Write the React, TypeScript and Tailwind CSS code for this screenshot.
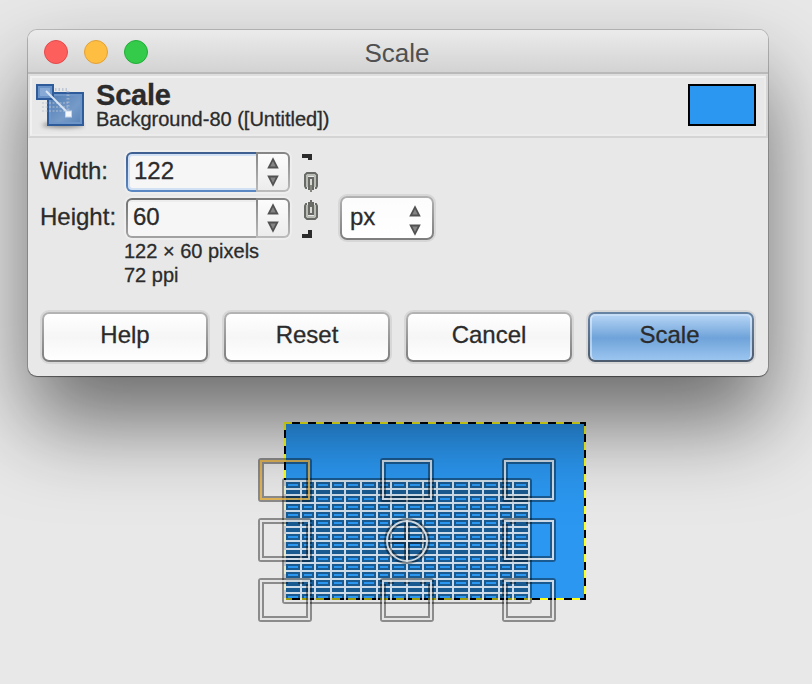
import React from "react";

const COLS = [284, 300, 314, 330, 344, 360, 376, 390, 406, 422, 436, 452, 468, 482, 498, 512, 528];
const ROWS = [480, 488, 494, 502, 510, 518, 526, 532, 540, 548, 554, 562, 570, 578, 586, 592, 600];

const gridPath =
  COLS.map((x) => `M${x + 1} 481V601`).join("") + ROWS.map((y) => `M285 ${y + 1}H529`).join("");

/* A light stroke inside a wider translucent dark one */
function Outlined({ d, light = "#fff" }: { d: string; light?: string }) {
  return (
    <g fill="none">
      <path d={d} stroke="#000" strokeOpacity="0.4" strokeWidth="6" strokeLinejoin="round" />
      <path d={d} stroke={light} strokeOpacity="0.78" strokeWidth="2" />
    </g>
  );
}

function Handle({ cx, cy, light }: { cx: number; cy: number; light?: string }) {
  return <Outlined d={`M${cx - 24} ${cy - 19}h48v38h-48z`} light={light} />;
}

function CanvasImage() {
  return (
    <svg className="ml-[250px] mt-[39px] block" width="350" height="215" viewBox="250 415 350 215">
      <rect x="284" y="422" width="302" height="178" fill="#2b97f0" />
      <g strokeWidth="2" fill="none" shapeRendering="crispEdges">
        <path d="M284 423H586M284 599H586M285 422V600M585 422V600" stroke="#ffff1e" />
        <g stroke="#000" strokeDasharray="8 8">
          <path d="M292 423H586" />
          <path d="M292 599H586" />
          <path d="M285 430V600" />
          <path d="M585 422V600" strokeDashoffset="4" />
        </g>
      </g>
      <Outlined d={gridPath + "M285 481H529V601H285Z"} />
      <Handle cx={285} cy={480} light="#f8c04a" />
      <Handle cx={407} cy={480} />
      <Handle cx={529} cy={480} />
      <Handle cx={285} cy={540} />
      <Handle cx={529} cy={540} />
      <Handle cx={285} cy={600} />
      <Handle cx={407} cy={600} />
      <Handle cx={529} cy={600} />
      <Outlined d="M387 541a20 20 0 1 0 40 0a20 20 0 1 0 -40 0M387 541H427M407 521V561" />
    </svg>
  );
}

function ScaleIcon() {
  return (
    <svg width="52" height="52" viewBox="34 80 52 52" className="relative top-px block shrink-0">
      <defs>
        <linearGradient id="big" x1="0" y1="0" x2="1" y2="1">
          <stop offset="0" stopColor="#4c79b0" />
          <stop offset="0.6" stopColor="#769bc9" />
          <stop offset="1" stopColor="#5580b4" />
        </linearGradient>
        <filter id="soft" x="-20%" y="-100%" width="140%" height="300%">
          <feGaussianBlur stdDeviation="2" />
        </filter>
      </defs>
      <ellipse cx="63" cy="125" rx="21" ry="3" fill="#777" opacity="0.8" filter="url(#soft)" />
      <rect x="48" y="93" width="35" height="32" fill="url(#big)" stroke="#2e5c9a" strokeWidth="2" />
      <rect x="50" y="95" width="31" height="28" fill="none" stroke="#6d95c8" strokeWidth="2" />
      <rect x="37" y="85" width="16" height="14" fill="#6a94c9" stroke="#2e5c9a" strokeWidth="2" />
      <rect x="40" y="88" width="10" height="8" fill="#86a9d6" />
      <path d="M55 89.500H68M68 91V111" fill="none" stroke="#aebccf" strokeWidth="3" strokeDasharray="1.500 2" opacity="0.7" />
      <path d="M42 103H68M42 107H68M42 111H66" fill="none" stroke="#b9c4d3" strokeWidth="1.500" strokeDasharray="2 1.500" opacity="0.6" />
      <path d="M46 91L67 112" stroke="#d9e4f2" strokeWidth="2" />
      <rect x="65.500" y="111" width="6" height="6" fill="#f5f8fc" stroke="#c3d4e9" />
    </svg>
  );
}

function Arrow({ down = false }: { down?: boolean }) {
  return (
    <svg width="12" height="12" viewBox="0 0 12 12" className={down ? "block rotate-180" : "block"}>
      <path d="M6 2.200L10.300 10.500H1.700Z" fill="#858585" stroke="#525252" strokeWidth="1.800" />
    </svg>
  );
}

function ChainLink() {
  return (
    <svg width="18" height="84" viewBox="302 154 18 84" className="ml-3 mt-[2px] block">
      <path d="M302 154h10v6h-4v-2h-6zM308 230h4v8h-10v-4h6z" fill="#2b2b2b" />
      <g fill="none">
        <path d="M307 188h-1l-1-2V175l2-2h8l2 2v11l-1 2h-1" stroke="#666964" strokeWidth="2" />
        <path d="M307 187V176l1-1h6l1 1v11" stroke="#b9bbb5" strokeWidth="2" />
        <path d="M309 190V178h4v12" stroke="#666964" strokeWidth="2" />
        <path d="M311 179v6" stroke="#d8d8d5" strokeWidth="2" />
        <path d="M311 185v7" stroke="#85877f" strokeWidth="2" />
        <path d="M307 204h-1l-1 2v11l2 2h8l2-2V206l-1-2h-1" stroke="#666964" strokeWidth="2" />
        <path d="M307 205v11l1 1h6l1-1V205" stroke="#b9bbb5" strokeWidth="2" />
        <path d="M309 202v12h4V202" stroke="#666964" strokeWidth="2" />
        <path d="M311 207v6" stroke="#d8d8d5" strokeWidth="2" />
        <path d="M311 200v7" stroke="#4b4d48" strokeWidth="1.600" />
      </g>
    </svg>
  );
}

function SpinField({ value, focused = false }: { value: string; focused?: boolean }) {
  return (
    <div className="flex h-10 w-[164px] rounded-md shadow-[0_0_0_2px_rgba(255,255,255,0.25)]">
      <div className={`w-[130px] rounded-l-md py-[2px] pl-[2px] ${focused ? "bg-linear-to-b from-[#3f5f91] to-[#5b88c3]" : "bg-linear-to-b from-[#707070] to-[#a3a3a3]"}`}>
        <div className={`flex h-full items-center rounded-l bg-[#f6f6f6] ${focused ? "border-y-2 border-l-2 border-[#d3e1f5] pl-1" : "border-t-2 border-[#ededed] pl-[5px]"}`}>
          <span className={focused ? "relative -top-px" : "relative -top-[2px]"}>{value}</span>
        </div>
      </div>
      <div className="w-[34px] rounded-r-md bg-linear-to-b from-[#858585] to-[#bcbcbc] p-[2px]">
        <div className="flex h-full flex-col items-center justify-between rounded-r bg-linear-to-b from-[#fcfcfc] to-[#ececec] py-[3px]">
          <Arrow />
          <Arrow down />
        </div>
      </div>
    </div>
  );
}

function Button({ label, primary = false }: { label: string; primary?: boolean }) {
  return (
    <button className={`h-[50px] w-[166px] rounded-[7px] p-[2px] shadow-[0_0_0_2px_rgba(0,0,0,0.07)] ${primary ? "bg-linear-to-b from-[#6884a5] to-[#4d5b6d]" : "bg-linear-to-b from-[#b4b4b4] to-[#7d7d7d]"}`}>
      <span className={`flex h-full items-center justify-center rounded-[5px] ${primary ? "border-2 border-b-0 border-[#ffffff70] bg-linear-to-b from-[#b2d2f4] via-[#6fa3d9] to-[#9bc5f0] pb-[6px] pr-[3px]" : "bg-linear-to-b from-white via-[#f6f6f6] to-white pb-1"}`}>
        {label}
      </span>
    </button>
  );
}

export default function App() {
  return (
    <div className="h-[684px] w-[812px] overflow-hidden bg-[#e8e8e8] pt-[30px] font-['Liberation_Sans',Arial,sans-serif] text-[24px] leading-none text-[#2b2b2b]">
      <div className="relative z-10 ml-7 h-[346px] w-[740px] rounded-[9px] bg-[#e8e8e8] shadow-[0_0_0_1px_rgba(0,0,0,0.18),0_1px_1px_rgba(0,0,0,0.35),0_46px_86px_rgba(0,0,0,0.54)] [-webkit-text-stroke:0.3px]">
        <div className="grid h-11 grid-cols-[1fr_auto_1fr] items-center rounded-t-[9px] border-b-2 border-[#b9b9b9] bg-linear-to-b from-[#ebebeb] to-[#d3d3d3]">
          <div className="flex gap-4 pl-4 pt-[2px]">
            <i className="h-6 w-6 rounded-full border border-[#e5484b] bg-[#fd605c]" />
            <i className="h-6 w-6 rounded-full border border-[#e2a136] bg-[#febe41]" />
            <i className="h-6 w-6 rounded-full border border-[#20ad37] bg-[#34cb4a]" />
          </div>
          <h1 className="relative -left-px pt-1 text-[26px] leading-none text-[#505050] [-webkit-text-stroke:0]">Scale</h1>
        </div>
        <header className="h-16 border-2 border-t-[#dedede] border-r-[#d6d6d6] border-b-[#d4d4d4] border-l-[#dcdcdc]">
          <div className="flex h-full items-center justify-between border-2 border-[#f1f1f1] border-r-[#ececec] border-b-[#ececec] pb-[2px] pl-[2px] pr-2">
            <div className="flex items-center">
              <ScaleIcon />
              <div className="ml-[10px]">
                <div className="text-[29px] font-bold leading-[29px] tracking-[-0.2px] text-[#2b2b2b]">Scale</div>
                <div className="-mt-px text-[20px] leading-[20px]">Background-80 ([Untitled])</div>
              </div>
            </div>
            <div className="h-[42px] w-[68px] border-2 border-black bg-[#2b97f0]" />
          </div>
        </header>
        <div className="flex h-[100px] pl-3 pt-[14px]">
          <div className="flex flex-col gap-[6px]">
            <label className="flex h-10 items-center">
              <span className="w-[86px] pb-[2px]">Width:</span>
              <SpinField value="122" focused />
            </label>
            <label className="flex h-10 items-center">
              <span className="w-[86px] pb-[2px]">Height:</span>
              <SpinField value="60" />
            </label>
          </div>
          <ChainLink />
          <div className="ml-5 mt-11 h-11 w-[94px] rounded-[7px] bg-linear-to-b from-[#b2b2b2] to-[#7d7d7d] p-[2px] shadow-[0_0_0_2px_rgba(0,0,0,0.07)]">
            <div className="flex h-full items-center justify-between rounded-[5px] bg-linear-to-b from-[#fcfcfc] to-white pl-2 pr-[11px]">
              <span className="pb-[2px]">px</span>
              <span className="flex flex-col gap-[7px] pt-1">
                <Arrow />
                <Arrow down />
              </span>
            </div>
          </div>
        </div>
        <div className="pl-24 pt-px text-[20px] leading-6">
          <p>122 × 60 pixels</p>
          <p>72 ppi</p>
        </div>
        <div className="flex gap-4 pl-[14px] pt-[25px]">
          <Button label="Help" />
          <Button label="Reset" />
          <Button label="Cancel" />
          <Button label="Scale" primary />
        </div>
      </div>
      <CanvasImage />
    </div>
  );
}
